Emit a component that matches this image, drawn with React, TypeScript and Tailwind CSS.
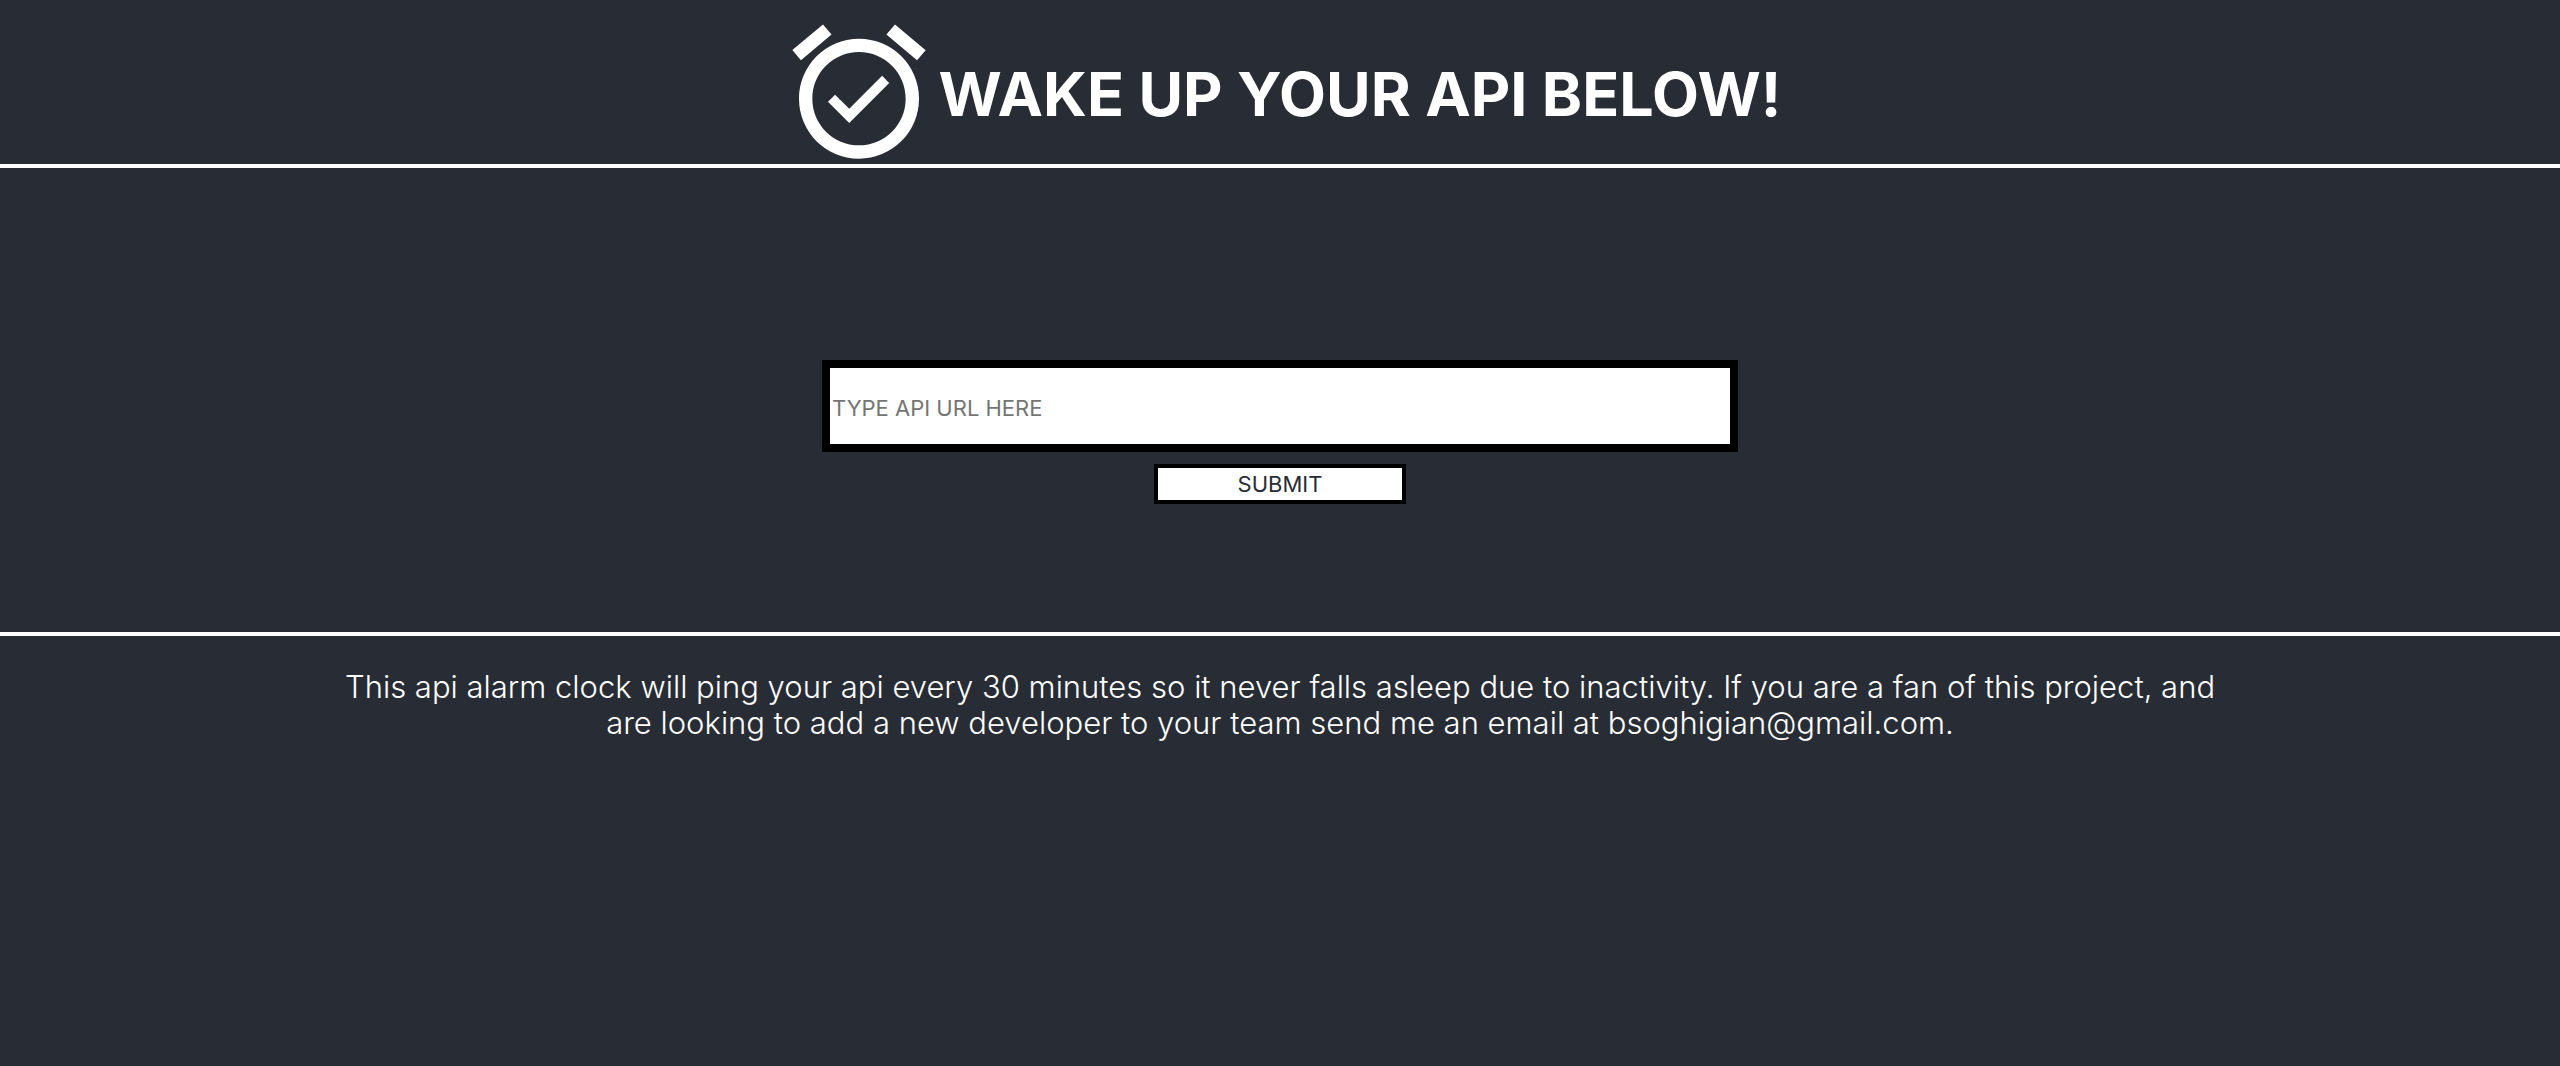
import { useState } from "react";

function AlarmIcon() {
  return (
    <svg
      viewBox="0 0 24 24"
      fill="currentColor"
      aria-hidden="true"
      className="-mb-2 size-40 shrink-0"
    >
      <path d="M22 5.72l-4.6-3.86-1.29 1.53 4.6 3.86L22 5.72zM7.88 3.39L6.6 1.86 2 5.71l1.29 1.53 4.59-3.85zM12 4c-4.97 0-9 4.03-9 9s4.02 9 9 9a9 9 0 0 0 0-18zm0 16c-3.87 0-7-3.13-7-7s3.13-7 7-7 7 3.13 7 7-3.13 7-7 7zm-1.46-5.47L8.41 12.4l-1.06 1.06 3.18 3.18 6-6-1.06-1.06-4.93 4.95z" />
    </svg>
  );
}

export default function App() {
  const [url, setUrl] = useState("");

  return (
    <div className="min-h-screen bg-[#282c34] font-['Inter',sans-serif] text-white">
      <header className="flex items-center justify-center border-b-4 border-white pt-3">
        <AlarmIcon />
        <h1 className="pt-3 text-[61px] leading-[72px] font-bold">WAKE UP YOUR API BELOW!</h1>
      </header>

      <main className="border-b-4 border-white pt-48 pb-32">
        <form
          className="flex flex-col items-center gap-3"
          onSubmit={(event) => event.preventDefault()}
        >
          <input
            type="text"
            aria-label="API URL"
            placeholder="TYPE API URL HERE"
            value={url}
            onChange={(event) => setUrl(event.target.value)}
            className="h-23 w-full max-w-[916px] border-8 border-black bg-white px-0.5 pt-1 text-[22px] text-[#282c34] placeholder:text-[#757575]"
          />
          <button
            type="submit"
            className="h-10 w-63 border-4 border-black bg-white text-[22px] leading-8 text-[#282c34]"
          >
            SUBMIT
          </button>
        </form>
      </main>

      <p className="mx-auto w-3/4 px-2 pt-[33px] text-center text-[31px] leading-9 font-light">
        This api alarm clock will ping your api every 30 minutes so it never falls asleep due to
        inactivity. If you are a fan of this project, and are looking to add a new developer to your
        team send me an email at bsoghigian@gmail.com.
      </p>
    </div>
  );
}
